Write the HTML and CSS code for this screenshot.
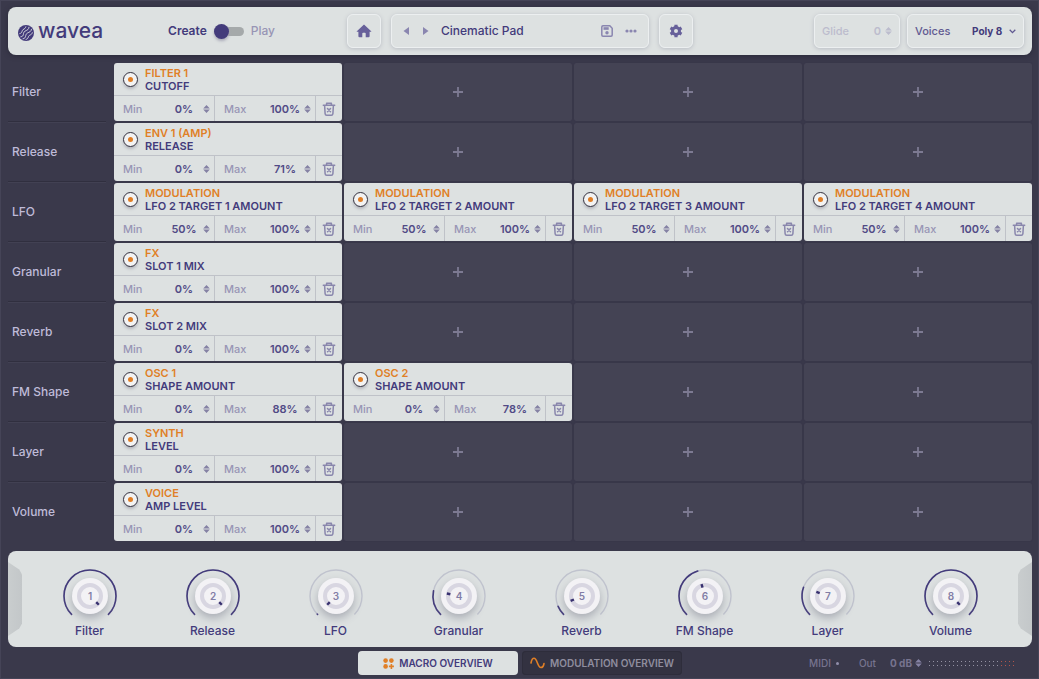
FILE: index.html
```html
<!DOCTYPE html>
<html lang="en">
<head>
  <meta charset="UTF-8" />
  <meta name="viewport" content="width=device-width, initial-scale=1" />
  <title>wavea</title>
  <link rel="stylesheet" href="styles.css">
</head>
<body>
  <!-- Shared icons -->
  <svg class="sprite" aria-hidden="true">
    <symbol id="i-step" viewBox="0 0 7 8">
      <path d="M3.5 0 6.8 3.4H.2zM3.5 8 .2 4.6h6.6z" fill="currentColor"/>
    </symbol>
    <symbol id="i-trash" viewBox="0 0 14 14">
      <g fill="none" stroke="currentColor" stroke-width="1.5" stroke-linecap="round" stroke-linejoin="round">
        <path d="M1.3 3.2h11.4M4.6 3V1.2h4.8V3M2.6 3.4l.5 8.2q.1 1.6 1.6 1.6h4.6q1.5 0 1.6-1.6l.5-8.2"/>
        <path d="M5.500 6.500l3 3.200M8.500 6.500l-3 3.200"/>
      </g>
    </symbol>
    <symbol id="i-plus" viewBox="0 0 10 10">
      <path d="M5 0v10M0 5h10" stroke="currentColor" stroke-width="1.8"/>
    </symbol>
  </svg>

  <header class="topbar">
    <div class="topbar-left">
      <a class="logo" href="#" aria-label="wavea">
        <svg width="16" height="16" viewBox="0 0 16 16">
          <circle cx="8" cy="8" r="8" fill="#433b7b"/>
          <g fill="none" stroke="#dde1e1" stroke-width=".9" stroke-linecap="round">
            <path d="M2.800 11.800C7 11.300 4.200 7.800 7 6.200s3.600-1.400 4-4"/>
            <path d="M5 13.800c4-.6 1.600-4 4.200-5.600s3.800-1.200 4.300-3.900"/>
            <path d="M1.800 8.600C4.800 8 3.400 5.800 5 4.700s2.300-1.200 2.800-2.900"/>
            <path d="M8 14.500c3.200-1.200 1.600-3 3.500-4.100s2.300-1 2.800-2.700"/>
          </g>
        </svg>
        <span>wavea</span>
      </a>
      <label class="mode">
        <span class="mode-on">Create</span>
        <input type="checkbox" class="mode-switch" aria-label="Play mode">
        <span class="mode-off">Play</span>
      </label>
    </div>

    <div class="topbar-center">
      <button class="box box-icon" aria-label="Home">
        <svg width="16" height="14" viewBox="0 0 16 14">
          <path d="M8 .6 15.200 7.200q.5.600-.3.600H13.600V12.300q0 1-1 1H9.700V9.600q0-.9-.8-.9H7.100q-.8 0-.8.900v3.700H3.400q-1 0-1-1V7.800H1.100q-.8 0-.3-.6z" fill="currentColor"/>
        </svg>
      </button>
      <div class="box preset">
        <button aria-label="Previous preset"><svg width="7" height="8" viewBox="0 0 7 8"><path d="M6 0v8L.5 4z" fill="currentColor"/></svg></button>
        <button aria-label="Next preset"><svg width="7" height="8" viewBox="0 0 7 8"><path d="M1 0v8l5.500-4z" fill="currentColor"/></svg></button>
        <span class="preset-name">Cinematic Pad</span>
        <button aria-label="Save preset">
          <svg width="12" height="12" viewBox="0 0 12 12">
            <path d="M2 .8h6.800L11.200 3.200V10q0 1.200-1.200 1.200H2Q.8 11.200.8 10V2Q.8.8 2 .8z" fill="none" stroke="currentColor" stroke-width="1.500"/>
            <path d="M2.500 2.200h5.200v2.600H2.500z" fill="currentColor"/>
            <circle cx="6" cy="7.800" r="1.700" fill="currentColor"/>
          </svg>
        </button>
        <button aria-label="More">
          <svg width="12" height="4" viewBox="0 0 12 4" fill="currentColor"><circle cx="2" cy="2" r="1.600"/><circle cx="6" cy="2" r="1.600"/><circle cx="10" cy="2" r="1.600"/></svg>
        </button>
      </div>
      <button class="box box-icon" aria-label="Settings">
        <svg width="14" height="14" viewBox="0 0 14 14">
          <g fill="none" stroke="currentColor">
            <circle cx="7" cy="7" r="3.500" stroke-width="3"/>
            <path d="M7 .7v2.500M7 10.800v2.500M1.500 3.850l2.200 1.250M10.300 8.900l2.200 1.250M1.500 10.150l2.200-1.250M10.300 5.100l2.200-1.250" stroke-width="3.200"/>
          </g>
        </svg>
      </button>
    </div>

    <div class="topbar-right">
      <div class="box field field-glide">
        <label for="glide">Glide</label>
        <input id="glide" type="text" value="0" disabled>
        <svg class="step"><use href="#i-step"/></svg>
      </div>
      <div class="box field field-voices">
        <label for="voices">Voices</label>
        <select id="voices">
          <option>Poly 8</option>
          <option>Mono</option>
        </select>
        <svg width="7" height="5" viewBox="0 0 7 5"><path d="M.7.8 3.500 3.600 6.300.8" fill="none" stroke="currentColor" stroke-width="1.300"/></svg>
      </div>
    </div>
  </header>

  <main class="matrix" id="matrix"></main>

  <section class="macros" aria-label="Macros">
    <button class="handle handle-left" aria-label="Left panel"></button>
    <div class="knobs" id="knobs"></div>
    <button class="handle handle-right" aria-label="Right panel"></button>
  </section>

  <footer class="bottombar">
    <nav class="tabs">
      <button class="tab active">
        <svg width="11" height="11" viewBox="0 0 11 11" fill="#e07f26"><circle cx="2.600" cy="2.600" r="2.300"/><circle cx="8.400" cy="2.600" r="2.300"/><circle cx="2.600" cy="8.400" r="2.300"/><path d="M7.600 5.900h1.600v1.700h1.700v1.600H9.200v1.700H7.600V9.200H5.900V7.600h1.700z"/></svg>
        MACRO OVERVIEW
      </button>
      <button class="tab">
        <svg width="15" height="12" viewBox="0 0 15 12"><path d="M1 6C1.600 2.800 2.700 1.300 4 1.300 7.500 1.300 7.200 10.500 11 10.500c1.600 0 2.600-1.500 3-4" fill="none" stroke="#e07f26" stroke-width="1.600" stroke-linecap="round"/></svg>
        MODULATION OVERVIEW
      </button>
    </nav>
    <div class="status">
      <span>MIDI</span>
      <i class="led"></i>
      <label for="out">Out</label>
      <input id="out" type="text" value="0 dB">
      <svg class="step"><use href="#i-step"/></svg>
      <div class="meter"></div>
    </div>
  </footer>

  <script src="script.js"></script>
</body>
</html>
```

FILE: styles.css
```css
:root {
  --bg: #3a394b;
  --slot: #444354;
  --panel: #dde1e1;
  --purple: #433b7b;
  --muted: #9895b5;
  --orange: #e07f26;
  --line: #bfc2c8;
}
* {
  box-sizing: border-box;
}
body {
  margin: 0;
  padding: 7px 7px 4px 8px;
  min-height: 100vh;
  background: var(--bg);
  color: var(--purple);
  font-family: Inter, sans-serif;
  font-size: 12px;
  font-weight: 500;
  line-height: 16px;
  box-shadow: inset 0 0 0 1px #454457;
}
button, input, select {
  font: inherit;
  color: inherit;
  background: none;
  border: 0;
  padding: 0;
  margin: 0;
}
button {
  cursor: pointer;
}
svg {
  display: block;
  flex: none;
}
.sprite {
  position: absolute;
  width: 0;
  height: 0;
}
.step {
  width: 7px;
  height: 8px;
  color: #8582a4;
}

/* Top bar */
.topbar {
  display: grid;
  grid-template-columns: 1fr auto 1fr;
  align-items: center;
  height: 48px;
  padding: 0 8px;
  background: var(--panel);
  border-radius: 8px;
  box-shadow: 0 1px 5px #2b2a3a;
}
.topbar-left {
  display: flex;
  align-items: center;
  justify-content: space-between;
  padding: 0 72px 0 2px;
}
.logo {
  display: flex;
  align-items: center;
  gap: 4px;
  color: var(--purple);
  font-size: 21px;
  line-height: 24px;
  text-decoration: none;
}
.logo svg {
  margin-top: 3px;
}
.mode {
  display: flex;
  align-items: center;
  gap: 7px;
}
.mode-on {
  font-weight: 600;
}
.mode-off {
  color: var(--muted);
}
.mode-switch {
  appearance: none;
  display: flex;
  align-items: center;
  width: 30px;
  height: 9px;
  border-radius: 5px;
  background: #a5a9aa;
}
.mode-switch::before {
  content: "";
  width: 15px;
  height: 15px;
  flex: none;
  border-radius: 50%;
  background: var(--purple);
  box-shadow: 0 2px 3px #a9a9b8;
}
.mode-switch:checked {
  justify-content: flex-end;
}
.topbar-center {
  display: flex;
  gap: 10px;
}
.topbar-right {
  display: flex;
  justify-content: flex-end;
  gap: 7px;
}
.box {
  display: flex;
  align-items: center;
  height: 34px;
  border: 1px solid #eceff0;
  border-radius: 6px;
  box-shadow: 0 1px 4px #b9bdc4;
}
.box-icon {
  width: 34px;
  justify-content: center;
  color: #67609a;
}
.preset {
  width: 258px;
  padding: 0 11px;
  gap: 12px;
  color: #8a86b0;
}
.preset-name {
  flex: 1;
  color: var(--purple);
}
.field {
  padding: 0 7px;
  font-size: 11px;
}
.field label {
  flex: 1;
}
.field-glide {
  width: 86px;
  gap: 4px;
  color: #bcbccd;
}
.field-glide .step {
  color: #bcbccd;
}
.field-glide input {
  width: 16px;
  text-align: right;
  font-weight: 600;
}
.field-voices {
  width: 117px;
  gap: 6px;
}
.field-voices label,
.field-voices svg {
  color: #615a91;
}
.field-voices select {
  appearance: none;
  font-size: 10px;
  font-weight: 700;
}

/* Macro assignment rows */
.matrix {
  display: flex;
  flex-direction: column;
  gap: 2px;
  margin-top: 8px;
}
.row {
  display: grid;
  grid-template-columns: 98px 1fr;
  gap: 8px;
  min-height: 58px;
}
.row-name {
  display: flex;
  align-items: center;
  margin: 0;
  padding-left: 4px;
  font-size: 12px;
  font-weight: 500;
  color: #bfbbd8;
  box-shadow: 0 1px #302f3f, 0 2px #424153;
}
.row:last-child .row-name {
  box-shadow: none;
}
.slots {
  display: grid;
  grid-template-columns: repeat(4, 1fr);
  gap: 2px;
}
.slot-empty {
  display: flex;
  align-items: center;
  justify-content: center;
  background: var(--slot);
  border-radius: 2px;
  color: #7d7a92;
  box-shadow: 0 0 1px #2f2e3d;
}
.slot-empty svg {
  width: 10px;
  height: 10px;
}
.card {
  display: flex;
  flex-direction: column;
  background: var(--panel);
  border-radius: 3px;
  overflow: hidden;
}
.card-head {
  display: flex;
  align-items: center;
  gap: 7px;
  flex: 1;
  padding: 2px 8px 0 9px;
  line-height: 13px;
}
.card-title {
  margin: 0;
  font-size: 11px;
  font-weight: 600;
}
.card-source {
  display: block;
  color: var(--orange);
}
.power {
  display: grid;
  place-items: center;
  width: 15px;
  height: 15px;
  margin-bottom: 2px;
  border: 1px solid #34323f;
  border-radius: 50%;
  background: #f3f3f3;
  box-shadow: 0 2px 3px #b4b6bd;
}
.power::before {
  content: "";
  width: 5px;
  height: 5px;
  border-radius: 50%;
  background: var(--orange);
}
.card-range {
  display: flex;
  height: 26px;
  border-top: 1px solid var(--line);
  font-size: 11px;
}
.limit {
  display: flex;
  align-items: center;
  gap: 2px;
  flex: 1;
  padding: 0 4px 0 9px;
  border-right: 1px solid var(--line);
}
.limit label {
  flex: 1;
  color: var(--muted);
}
.limit input {
  width: 34px;
  text-align: center;
  font-weight: 600;
  color: #514a86;
}
.trash {
  display: grid;
  place-items: center;
  width: 26px;
  color: #8a87ad;
}
.trash svg {
  width: 14px;
  height: 14px;
}

/* Macro knobs */
.macros {
  display: flex;
  align-items: center;
  height: 96px;
  margin-top: 10px;
  background: var(--panel);
  border-radius: 8px;
}
.handle {
  width: 14px;
  height: 74px;
  background: linear-gradient(90deg, #c9cdce, #c3c7c9);
}
.handle-left {
  clip-path: polygon(0 0, 80% 10%, 100% 17%, 100% 83%, 80% 90%, 0 100%);
}
.handle-right {
  clip-path: polygon(100% 0, 20% 10%, 0 17%, 0 83%, 20% 90%, 100% 100%);
}
.knobs {
  display: grid;
  grid-template-columns: repeat(8, 1fr);
  flex: 1;
  padding: 8px 6px 0;
}
.knob {
  position: relative;
  display: flex;
  flex-direction: column;
  align-items: center;
}
.knob svg {
  width: 60px;
  height: 56px;
  overflow: visible;
}
.knob label {
  line-height: 14px;
}
.knob input {
  position: absolute;
  top: 0;
  width: 56px;
  height: 56px;
  opacity: 0;
}
.knob-arc {
  fill: none;
  stroke: #c0c3ce;
  stroke-width: 1.4;
}
.knob-value {
  fill: none;
  stroke: var(--purple);
  stroke-width: 1.6;
  stroke-linecap: round;
}
.knob-body {
  fill: #f3f2f5;
  filter: drop-shadow(0 4px 4px #a9acb4);
}
.knob-ring {
  fill: none;
  stroke: #d8d6e1;
  stroke-width: 4;
}
.knob-mark {
  stroke: #37306f;
  stroke-width: 2.4;
}
.knob text {
  fill: #827ea6;
  font-size: 10px;
  font-weight: 600;
  text-anchor: middle;
}

/* Bottom bar */
.bottombar {
  display: grid;
  grid-template-columns: 1fr auto 1fr;
  align-items: center;
  margin-top: 4px;
}
.tabs {
  grid-column: 2;
  display: flex;
  gap: 4px;
}
.tab {
  display: flex;
  align-items: center;
  justify-content: center;
  gap: 5px;
  width: 160px;
  height: 24px;
  border-radius: 4px;
  background: #333241;
  box-shadow: inset 0 0 0 1px #2e2d3b;
  color: #8f8d9e;
  font-size: 10px;
  font-weight: 600;
  white-space: nowrap;
}
.tab.active {
  background: var(--panel);
  box-shadow: none;
  color: var(--purple);
}
.status {
  display: flex;
  align-items: center;
  justify-content: flex-end;
  padding-right: 17px;
  color: #77748f;
  font-size: 10px;
}
.led {
  width: 3px;
  height: 3px;
  margin: 0 20px 0 5px;
  border-radius: 50%;
  background: #918eaa;
}
.status input {
  width: 23px;
  margin: 0 2px 0 14px;
  font-weight: 700;
}
.meter {
  width: 86px;
  height: 5px;
  margin-left: 7px;
  background: linear-gradient(90deg, #9391a2 82%, #b0554a 82%);
  mask: conic-gradient(from 270deg at 1px 1px, #000 90deg, transparent 0) 0 0 / 4px 4px;
}
```

FILE: script.js
```js
const rows = [
  { name: 'Filter', cards: [['FILTER 1', 'CUTOFF', 0, 100]] },
  { name: 'Release', cards: [['ENV 1 (AMP)', 'RELEASE', 0, 71]] },
  { name: 'LFO', cards: [
    ['MODULATION', 'LFO 2 TARGET 1 AMOUNT', 50, 100],
    ['MODULATION', 'LFO 2 TARGET 2 AMOUNT', 50, 100],
    ['MODULATION', 'LFO 2 TARGET 3 AMOUNT', 50, 100],
    ['MODULATION', 'LFO 2 TARGET 4 AMOUNT', 50, 100]
  ] },
  { name: 'Granular', cards: [['FX', 'SLOT 1 MIX', 0, 100]] },
  { name: 'Reverb', cards: [['FX', 'SLOT 2 MIX', 0, 100]] },
  { name: 'FM Shape', cards: [['OSC 1', 'SHAPE AMOUNT', 0, 88], ['OSC 2', 'SHAPE AMOUNT', 0, 78]] },
  { name: 'Layer', cards: [['SYNTH', 'LEVEL', 0, 100]] },
  { name: 'Volume', cards: [['VOICE', 'AMP LEVEL', 0, 100]] }
];
const values = [100, 100, 0, 21, 8, 44, 24, 100];

function limit(label, id, value) {
  return `<div class="limit">
    <label for="${id}">${label}</label>
    <input id="${id}" type="text" value="${value}%">
    <svg class="step"><use href="#i-step"/></svg>
  </div>`;
}

function card([source, target, min, max], id) {
  return `<article class="card">
    <div class="card-head">
      <button class="power" aria-label="Toggle ${target}"></button>
      <h3 class="card-title"><span class="card-source">${source}</span>${target}</h3>
    </div>
    <div class="card-range">
      ${limit('Min', 'min-' + id, min)}
      ${limit('Max', 'max-' + id, max)}
      <button class="trash" aria-label="Remove"><svg><use href="#i-trash"/></svg></button>
    </div>
  </article>`;
}

function row({ name, cards }, r) {
  let slots = '';
  for (let c = 0; c < 4; c++) {
    slots += cards[c]
      ? card(cards[c], r + '-' + c)
      : '<button class="slot-empty" aria-label="Add target"><svg><use href="#i-plus"/></svg></button>';
  }
  return `<section class="row"><h2 class="row-name">${name}</h2><div class="slots">${slots}</div></section>`;
}

// 270 degree sweep, starting at the lower left
function knob({ name }, i) {
  const value = values[i];
  const arc = 'M11.6 46.4a26 26 0 1 1 36.8 0';
  return `<div class="knob">
    <svg viewBox="0 0 60 56">
      <path class="knob-arc" d="${arc}"/>
      <path class="knob-value" d="${arc}" pathLength="100" stroke-dasharray="${value || 0.5} 200"/>
      <circle class="knob-body" cx="30" cy="28" r="18"/>
      <circle class="knob-ring" cx="30" cy="28" r="11"/>
      <path class="knob-mark" d="M30 19.2v-3.6" transform="rotate(${-135 + value * 2.7} 30 28)"/>
      <text x="30" y="32">${i + 1}</text>
    </svg>
    <label for="knob-${i}">${name}</label>
    <input id="knob-${i}" type="range" min="0" max="100" value="${value}">
  </div>`;
}

document.getElementById('matrix').innerHTML = rows.map(row).join('');
document.getElementById('knobs').innerHTML = rows.map(knob).join('');
```
